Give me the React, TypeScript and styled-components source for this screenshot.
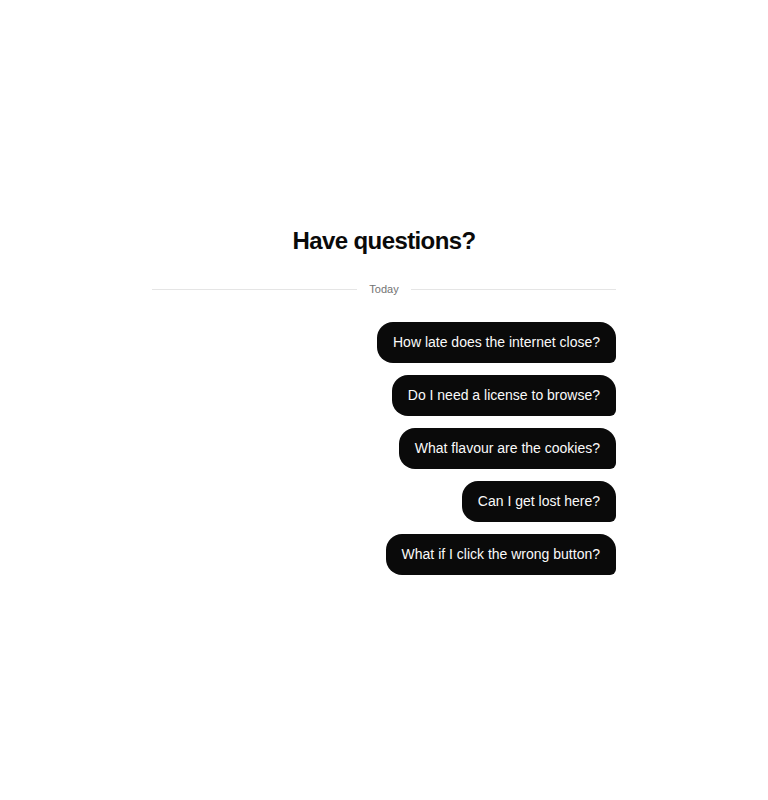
import React, {useState} from "react";
import styled, {createGlobalStyle} from "styled-components";

const GlobalStyle = createGlobalStyle`
    *, *::before, *::after {
        box-sizing: border-box;
    }

    body {
        margin: 0;
        background: #ffffff;
        color: #0a0a0a;
        font-family: "Liberation Sans", Arial, sans-serif;
    }
`;

const Section = styled.section`
    display: flex;
    align-items: center;
    justify-content: center;
    min-height: 100vh;
    padding: 24px;
`;

const Container = styled.div`
    width: 100%;
    max-width: 464px;
`;

const Title = styled.h2`
    margin: 0 0 24px;
    font-size: 24px;
    line-height: 32px;
    font-weight: 700;
    letter-spacing: -0.025em;
    text-align: center;
`;

const DayDivider = styled.div`
    display: flex;
    align-items: center;
    gap: 12px;
    margin-bottom: 24px;
    color: #737373;
    font-size: 11px;
    line-height: 17px;

    &::before,
    &::after {
        content: "";
        flex: 1;
        height: 1px;
        background: #e5e5e5;
    }
`;

const QuestionList = styled.ul`
    display: flex;
    flex-direction: column;
    gap: 12px;
    margin: 0;
    padding: 0;
    list-style: none;
`;

const QuestionItem = styled.li`
    display: flex;
    flex-direction: column;
    gap: 12px;
`;

const QuestionBubble = styled.button`
    align-self: flex-end;
    padding: 9px 16px;
    border: none;
    border-radius: 16px 16px 6px 16px;
    background: #0a0a0a;
    color: #fafafa;
    font-family: inherit;
    font-size: 14px;
    line-height: 23px;
    text-align: left;
    cursor: pointer;
`;

const AnswerBubble = styled.p`
    align-self: flex-start;
    margin: 0;
    padding: 9px 16px;
    border-radius: 16px 16px 16px 6px;
    background: #f5f5f5;
    font-size: 14px;
    line-height: 23px;
`;

type QuestionType = {
    id: number;
    question: string;
    answer: string;
};

const questions: QuestionType[] = [
    {id: 1, question: "How late does the internet close?", answer: "It never closes."},
    {id: 2, question: "Do I need a license to browse?", answer: "No, just curiosity."},
    {id: 3, question: "What flavour are the cookies?", answer: "Mostly chocolate chip."},
    {id: 4, question: "Can I get lost here?", answer: "Yes, but there is a back button."},
    {id: 5, question: "What if I click the wrong button?", answer: "Then click another one."},
];

function Question({question, answer}: QuestionType) {
    const [open, setOpen] = useState(false);

    return (
        <QuestionItem>
            <QuestionBubble type="button" aria-expanded={open} onClick={() => setOpen(!open)}>
                {question}
            </QuestionBubble>
            {open && <AnswerBubble>{answer}</AnswerBubble>}
        </QuestionItem>
    );
}

export default function App() {
    return (
        <>
            <GlobalStyle/>
            <Section>
                <Container>
                    <Title>Have questions?</Title>
                    <DayDivider>Today</DayDivider>
                    <QuestionList>
                        {questions.map(q => <Question key={q.id} {...q}/>)}
                    </QuestionList>
                </Container>
            </Section>
        </>
    );
}
